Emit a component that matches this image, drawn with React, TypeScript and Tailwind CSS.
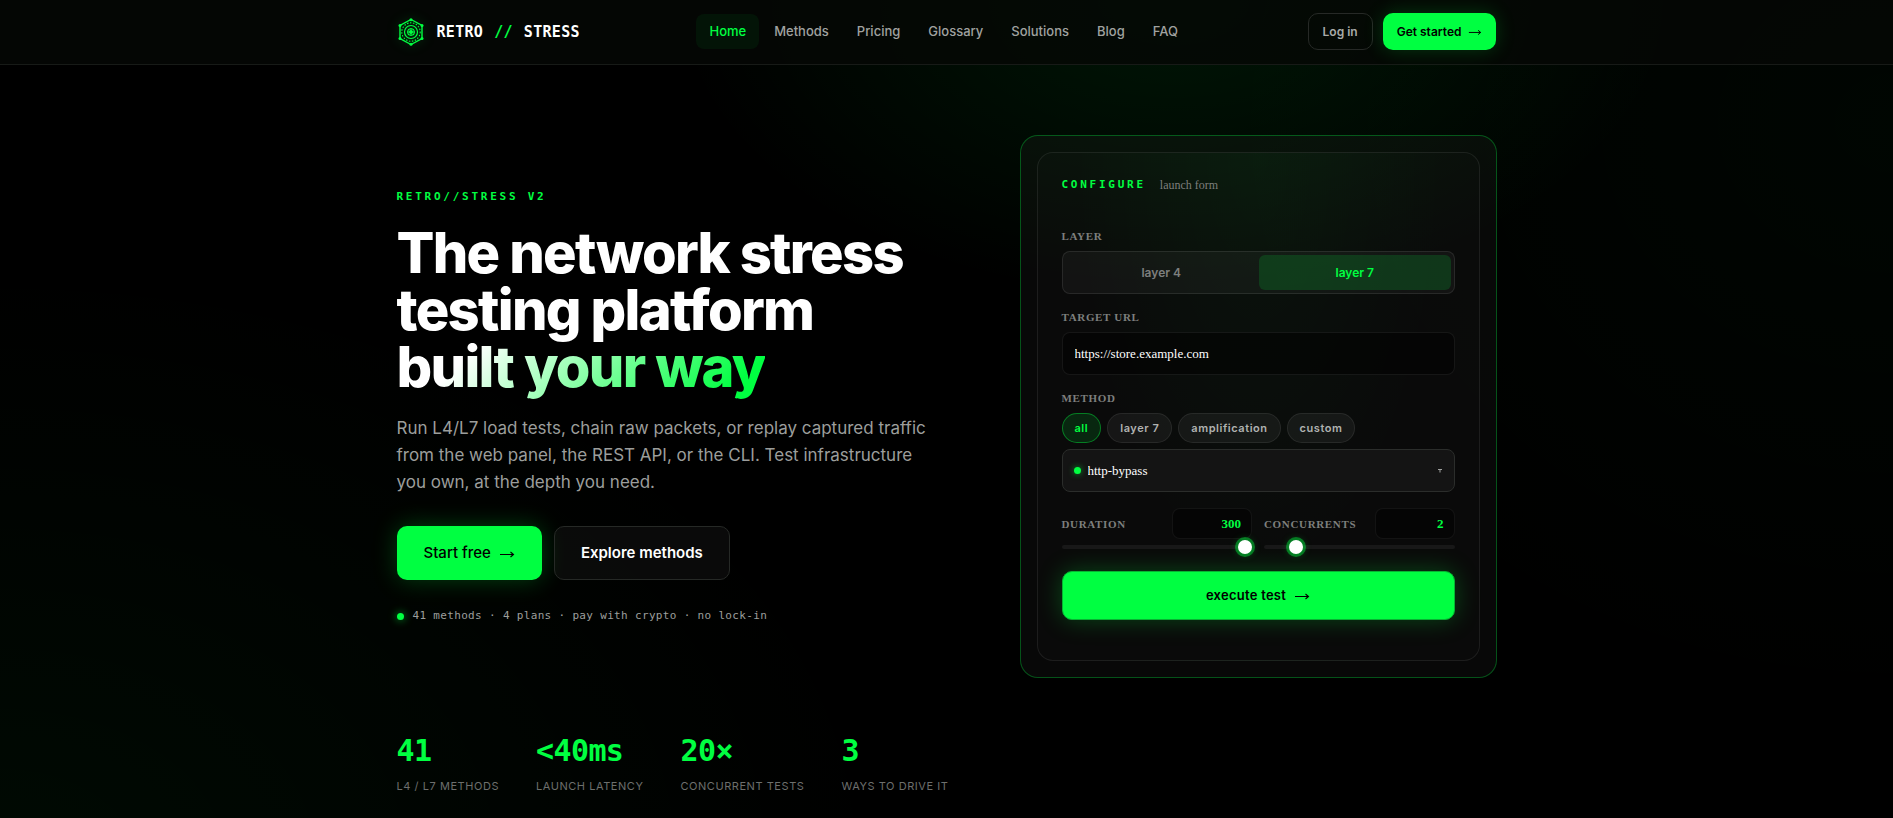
import { useState } from 'react';

const navLinks = ['Home', 'Methods', 'Pricing', 'Glossary', 'Solutions', 'Blog', 'FAQ'];

const stats = [
  { value: '41', label: 'L4 / L7 methods' },
  { value: '<40ms', label: 'Launch latency' },
  { value: '20×', label: 'Concurrent tests' },
  { value: '3', label: 'Ways to drive it' },
];

const filters = ['all', 'layer 7', 'amplification', 'custom'];

const mono = "font-['DejaVu_Sans_Mono',monospace]";
const serif = "font-['Liberation_Serif',serif]";
const labelClass = "block font-['Liberation_Serif',serif] text-[11px] leading-[14px] font-bold uppercase tracking-[0.06em] text-[#7d7f7d]";
const sliderClass =
  'block h-1 w-full appearance-none rounded-full bg-[#181818] outline-none [&::-webkit-slider-thumb]:size-[14px] [&::-webkit-slider-thumb]:appearance-none [&::-webkit-slider-thumb]:rounded-full [&::-webkit-slider-thumb]:bg-white [&::-webkit-slider-thumb]:shadow-[0_0_0_3px_rgba(0,255,65,0.4),0_0_8px_rgba(0,255,65,0.4)]';

function Logo() {
  return (
    <svg viewBox="0 0 28 28" className="size-7 drop-shadow-[0_0_6px_rgba(0,255,65,0.25)]" fill="none" stroke="#00ff41">
      <path d="M14 1.5 25 7.5v13L14 26.5 3 20.500v-13z" strokeWidth="1.4" />
      <circle cx="14" cy="14" r="9.200" strokeWidth="1.1" strokeDasharray="1.5 1.5" />
      <circle cx="14" cy="14" r="6.500" strokeWidth="1.2" />
      <circle cx="14" cy="14" r="3.300" strokeWidth="1.1" />
      <path d="M14 10v8M10 14h8" strokeWidth="1" />
      <g fill="#00ff41" stroke="none">
        <circle cx="14" cy="14" r="2" />
        <circle cx="14" cy="1.800" r="1.500" />
        <circle cx="25" cy="7.500" r="1.500" />
        <circle cx="25" cy="20.500" r="1.500" />
        <circle cx="14" cy="26.200" r="1.500" />
        <circle cx="3" cy="20.500" r="1.500" />
        <circle cx="3" cy="7.500" r="1.500" />
      </g>
    </svg>
  );
}

function Arrow({ className }: { className: string }) {
  return (
    <svg viewBox="0 0 16 8" className={`mt-px h-2 ${className}`} fill="none" stroke="currentColor" strokeWidth="1.1">
      <path d="M1 4.500h13.500M11.500 2l3 2.500-3 2.500" />
    </svg>
  );
}

function Header() {
  return (
    <header className="border-b border-[#171a17] bg-[#050705]/80">
      <div className="mx-auto flex h-16 max-w-[1100px] items-center justify-between pb-px">
        <a href="#" className="flex items-center gap-3">
          <Logo />
          <span className={`${mono} flex gap-[11px] pt-px text-[15px] font-bold tracking-[0.02em] text-white`}>
            <span>RETRO</span>
            <span className="text-[#00ff41]">//</span>
            <span>STRESS</span>
          </span>
        </a>
        <nav className="flex gap-0.5">
          {navLinks.map((link) => (
            <a
              key={link}
              href="#"
              className={`rounded-lg px-[13px] py-2 text-[13px] leading-[19px] font-medium ${
                link === 'Home' ? 'bg-[#00ff41]/6 text-[#00ff41]' : 'text-[#a0a2a0]'
              }`}
            >
              {link}
            </a>
          ))}
        </nav>
        <div className="flex gap-2.5">
          <button className="h-[37px] rounded-[10px] border border-[#262926] px-3.5 text-[12px] font-semibold text-[#a8aaa8]">
            Log in
          </button>
          <button className="flex h-[37px] items-center gap-[7px] rounded-[10px] bg-[#00ff41] px-3.5 text-[12px] font-semibold text-black shadow-[0_0_20px_rgba(0,255,65,0.2)]">
            Get started <Arrow className="w-[14px]" />
          </button>
        </div>
      </div>
    </header>
  );
}

function LaunchForm() {
  const [layer, setLayer] = useState('layer 7');
  const [filter, setFilter] = useState('all');
  const [target, setTarget] = useState('https://store.example.com');
  const [duration, setDuration] = useState(300);
  const [concurrents, setConcurrents] = useState(2);

  return (
    <div className="rounded-[18px] border border-[#00ff41]/30 bg-white/3 p-4">
      <form
        onSubmit={(e) => e.preventDefault()}
        className="rounded-2xl border border-white/8 bg-white/1 bg-[radial-gradient(ellipse_at_50%_0%,rgba(0,255,65,0.035),transparent_60%)] px-6 pt-6 pb-10"
      >
        <div className="mb-9 flex items-center gap-3.5 leading-4">
          <span className={`${mono} text-[11px] font-bold tracking-[0.25em] text-[#00ff41]`}>CONFIGURE</span>
          <span className={`${serif} text-[12px] text-[#7d7f7d]`}>launch form</span>
        </div>

        <div className={labelClass}>Layer</div>
        <div className="mt-2 grid h-[43px] grid-cols-2 gap-0.5 rounded-lg border border-white/9 bg-white/4 p-[3px]">
          {['layer 4', 'layer 7'].map((name) => (
            <button
              key={name}
              type="button"
              onClick={() => setLayer(name)}
              className={`rounded-md text-[12px] font-semibold ${
                layer === name ? 'bg-[#00ff41]/15 text-[#00ff41]' : 'text-[#7d7f7d]'
              }`}
            >
              {name}
            </button>
          ))}
        </div>

        <label htmlFor="target" className={`${labelClass} mt-4`}>
          Target URL
        </label>
        <input
          id="target"
          type="text"
          value={target}
          onChange={(e) => setTarget(e.target.value)}
          className={`${serif} mt-2 block h-[43px] w-full rounded-lg border border-white/7 bg-black/50 px-3 text-[13px] text-white outline-none`}
        />

        <label htmlFor="method" className={`${labelClass} mt-4`}>
          Method
        </label>
        <div className="mt-2 flex gap-1.5">
          {filters.map((name) => (
            <button
              key={name}
              type="button"
              onClick={() => setFilter(name)}
              className={`h-[30px] rounded-full border px-3 text-[11px] font-semibold tracking-[0.05em] ${
                filter === name
                  ? 'border-[#00ff41]/40 bg-[#00ff41]/12 text-[#00ff41]'
                  : 'border-white/8 bg-white/5 text-[#b0b2b0]'
              }`}
            >
              {name}
            </button>
          ))}
        </div>
        <div className="relative mt-1.5">
          <select
            id="method"
            className={`${serif} block h-[43px] w-full appearance-none rounded-lg border border-[#2b2d2b] bg-[#141414] pr-8 pl-[25px] text-[13px] text-white outline-none`}
          >
            <option>http-bypass</option>
          </select>
          <span className="pointer-events-none absolute top-[18px] left-3 size-[7px] rounded-full bg-[#00ff41] shadow-[0_0_6px_rgba(0,255,65,0.6)]" />
          <svg viewBox="0 0 4 4" className="pointer-events-none absolute top-5 right-[13px] size-1" fill="#a0a2a0">
            <path d="M0 0h4v1H2.500v2.500h-1V1H0z" />
          </svg>
        </div>

        <div className="mt-4 grid grid-cols-2 gap-3">
          <div>
            <div className="flex items-center justify-between">
              <label htmlFor="duration" className={labelClass}>
                Duration
              </label>
              <input
                id="duration"
                type="text"
                value={duration}
                onChange={(e) => setDuration(Number(e.target.value))}
                className={`${serif} h-[31px] w-20 rounded-lg border border-white/6 bg-black/50 px-2.5 text-right text-[13px] font-bold text-[#00ff41] outline-none`}
              />
            </div>
            <input
              type="range"
              aria-label="Duration"
              min={10}
              max={300}
              value={duration}
              onChange={(e) => setDuration(Number(e.target.value))}
              className={`${sliderClass} mt-1.5`}
            />
          </div>
          <div>
            <div className="flex items-center justify-between">
              <label htmlFor="concurrents" className={labelClass}>
                Concurrents
              </label>
              <input
                id="concurrents"
                type="text"
                value={concurrents}
                onChange={(e) => setConcurrents(Number(e.target.value))}
                className={`${serif} h-[31px] w-20 rounded-lg border border-white/6 bg-black/50 px-2.5 text-right text-[13px] font-bold text-[#00ff41] outline-none`}
              />
            </div>
            <input
              type="range"
              aria-label="Concurrents"
              min={1}
              max={8}
              value={concurrents}
              onChange={(e) => setConcurrents(Number(e.target.value))}
              className={`${sliderClass} mt-1.5`}
            />
          </div>
        </div>

        <button
          type="submit"
          className="mt-[22px] flex h-[49px] w-full items-center justify-center gap-2 rounded-[10px] border border-[#06b432] bg-[#00ff41] text-[13px] font-semibold tracking-[0.02em] text-black shadow-[0_0_24px_rgba(0,255,65,0.25)]"
        >
          execute test <Arrow className="w-4" />
        </button>
      </form>
    </div>
  );
}

export default function App() {
  return (
    <div className="min-h-screen bg-black bg-[radial-gradient(ellipse_500px_300px_at_62%_0%,rgba(0,255,65,0.09),transparent),radial-gradient(ellipse_900px_600px_at_0%_105%,rgba(0,255,65,0.04),transparent),radial-gradient(ellipse_700px_600px_at_100%_15%,rgba(0,255,65,0.025),transparent)] bg-no-repeat font-['Inter',sans-serif]">
      <Header />
      <main className="mx-auto max-w-[1100px] pt-[70px]">
        <section className="grid grid-cols-[minmax(0,1fr)_477px] items-center gap-16">
          <div>
            <p className={`${mono} text-[11px] leading-4 font-bold tracking-[0.25em] text-[#00ff41]`}>RETRO//STRESS V2</p>
            <h1 className="mt-5 text-[56px] leading-[57px] font-extrabold tracking-[-0.03em] text-white">
              The network stress
              <br />
              testing platform
              <br />
              <span className="inline-block bg-[linear-gradient(135deg,#fff_20%,#00ff41_90%)] bg-clip-text pb-1 text-transparent">
                built your way
              </span>
            </h1>
            <p className="mt-[15px] max-w-[540px] text-[17px] leading-[27px] text-[#9c9e9c]">
              Run L4/L7 load tests, chain raw packets, or replay captured traffic from the web panel, the REST API, or the CLI. Test
              infrastructure you own, at the depth you need.
            </p>
            <div className="mt-[30px] flex gap-3">
              <button className="flex h-[54px] items-center gap-2 rounded-[10px] bg-[#00ff41] px-[27px] text-[15px] font-medium text-black shadow-[0_0_24px_rgba(0,255,65,0.25)]">
                Start free <Arrow className="w-4" />
              </button>
              <button className="h-[54px] rounded-[10px] border border-[#262926] bg-white/4 px-[26px] text-[15px] font-semibold text-white">
                Explore methods
              </button>
            </div>
            <p className={`${mono} mt-7 flex items-center gap-[9px] text-[11px] leading-4 tracking-[0.03em] text-[#9c9e9c]`}>
              <span className="size-[7px] rounded-full bg-[#00ff41] shadow-[0_0_8px_rgba(0,255,65,0.7)]" />
              41 methods · 4 plans · pay with crypto · no lock-in
            </p>
          </div>
          <LaunchForm />
        </section>

        <dl className="mt-[57px] flex gap-[37px] pb-6">
          {stats.map((stat) => (
            <div key={stat.label} className="flex flex-col-reverse">
              <dt className="mt-[11px] text-[11px] leading-4 tracking-[0.05em] text-[#6d6f6d] uppercase">{stat.label}</dt>
              <dd className={`${mono} text-[30px] leading-8 font-bold tracking-[-0.02em] text-[#00ff41]`}>{stat.value}</dd>
            </div>
          ))}
        </dl>
      </main>
    </div>
  );
}
